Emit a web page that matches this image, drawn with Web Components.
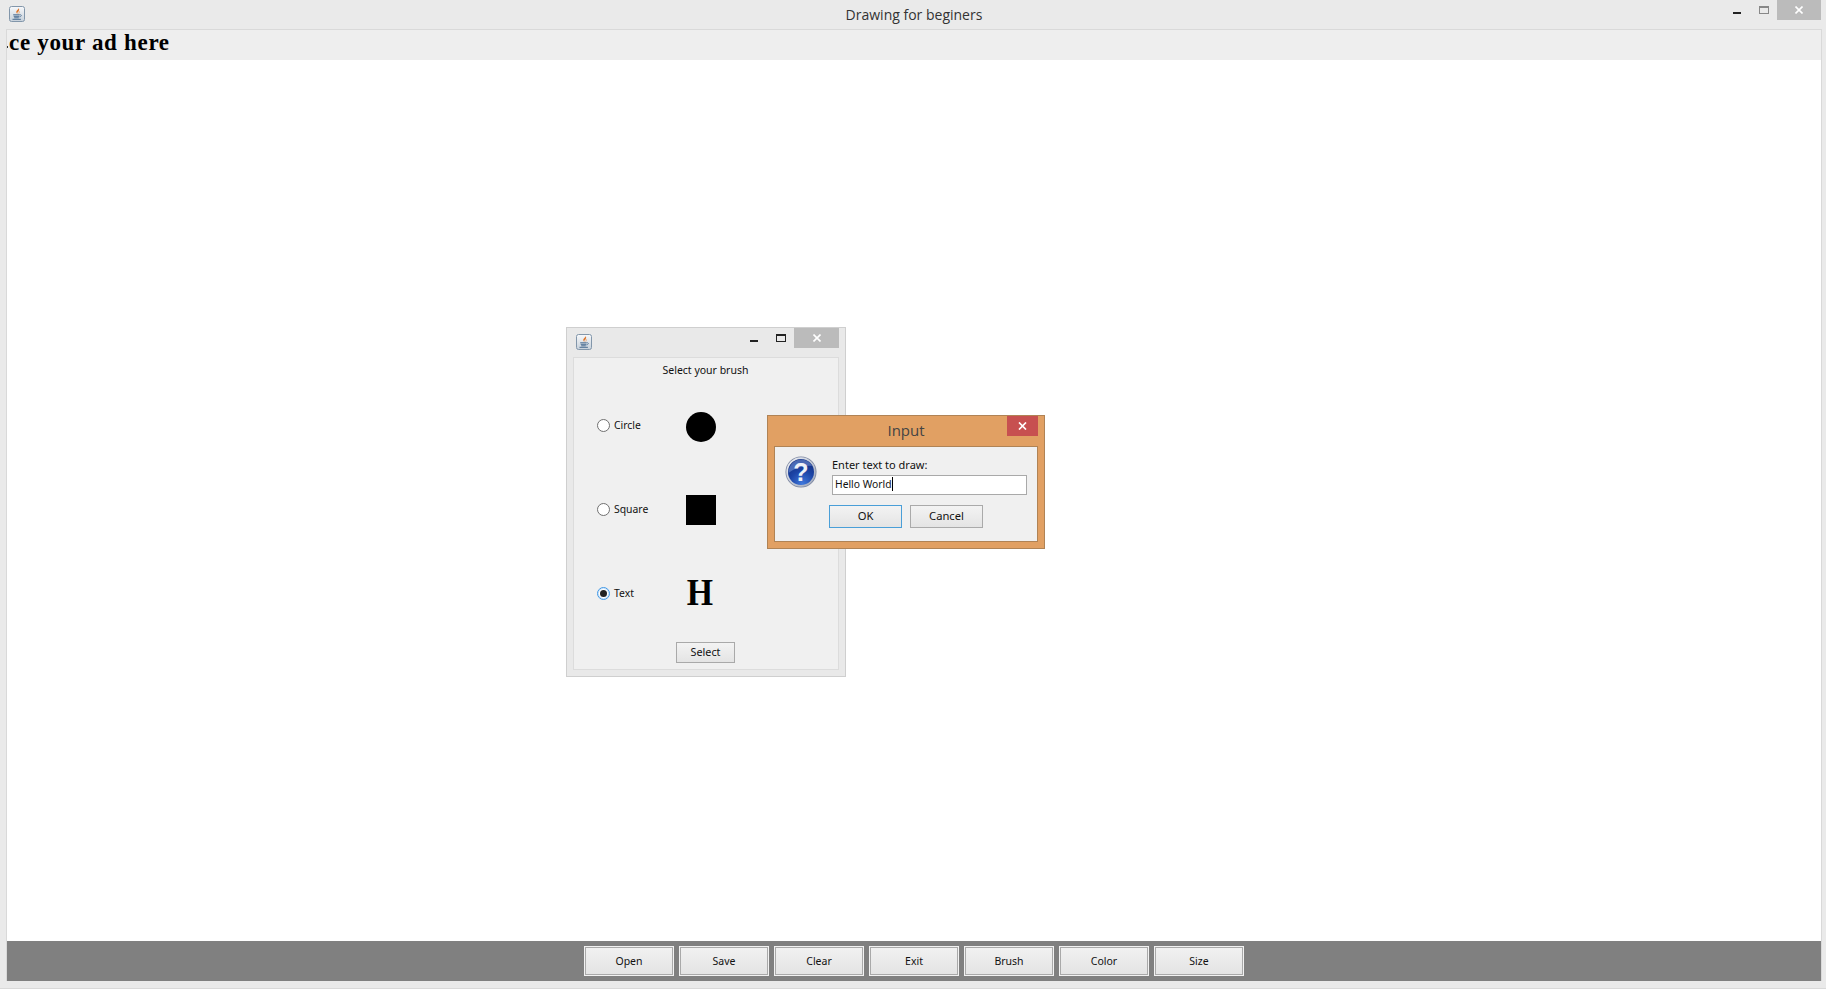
<!DOCTYPE html>
<html>
<head>
<meta charset="utf-8">
<title>Drawing for beginers</title>
<style>
html, body { margin: 0; height: 100%; overflow: hidden; background: #eaeaea; }
body { font-family: "Noto Sans", "Liberation Sans", sans-serif; font-size: 11px; color: #111; }
</style>
</head>
<body>
<main-window caption="Drawing for beginers">
    <ad-banner>ce your ad here</ad-banner>
    <tool-bar slot="bar">
        <tool-button>Open</tool-button>
        <tool-button>Save</tool-button>
        <tool-button>Clear</tool-button>
        <tool-button>Exit</tool-button>
        <tool-button>Brush</tool-button>
        <tool-button>Color</tool-button>
        <tool-button>Size</tool-button>
    </tool-bar>
</main-window>
<brush-window>
    <brush-option shape="circle">Circle</brush-option>
    <brush-option shape="square">Square</brush-option>
    <brush-option shape="text" checked>Text</brush-option>
</brush-window>
<input-dialog></input-dialog>

<script>
const JAVA_ICON = `
<svg width="16" height="16" viewBox="0 0 16 16" style="display:block">
  <defs><linearGradient id="jb" x1="0" y1="0" x2="0" y2="1">
    <stop offset="0" stop-color="#f8f9fb"/><stop offset="1" stop-color="#c6d0da"/>
  </linearGradient></defs>
  <rect x=".5" y=".5" width="15" height="15" rx="2" fill="url(#jb)" stroke="#8296aa"/>
  <path d="M9.500 1.800C10.400 3.400 7 4.300 7.300 6.300 7.450 7.200 8 7.600 8.400 8 8.200 7 8.300 6.500 9.100 5.700 10 4.800 10.800 3.400 9.500 1.800Z" fill="#e0762a"/>
  <path d="M9.700 5.500C11 5.200 10 6.800 9.800 7.600" stroke="#e79a5a" stroke-width=".8" fill="none"/>
  <path d="M4.200 8.800h6.600M4.700 10.300h5.600M5.200 11.800h4.600M3.500 13.300h8.400" stroke="#4a6d92" stroke-width="1" fill="none"/>
  <path d="M11 8.800c1.700-.4 2.100 1.600-.6 2.200" stroke="#4a6d92" stroke-width=".8" fill="none"/>
</svg>`;

class MainWindow extends HTMLElement {
    constructor() {
        super();
        this.attachShadow({ mode: "open" });
        this.shadowRoot.innerHTML = `
<style>
:host { display: flex; flex-direction: column; height: 989px; box-sizing: border-box; border-bottom: 1px solid #d9d9d9; }
.title { flex: 0 0 29px; display: flex; position: relative; align-items: flex-start; }
.icon { margin: 6px 0 0 9px; }
.caption { position: absolute; left: 0; right: 0; top: 5px; text-align: center; font: 14px/19px "Open Sans", sans-serif; color: #333; padding-left: 2px; }
.controls { margin-left: auto; margin-right: 5px; display: flex; position: relative; }
.frame { flex: 1; min-height: 0; display: flex; flex-direction: column; margin: 0 4px 7px 6px; border: 1px solid #d9d9d9; border-bottom: 0; }
.canvas { flex: 1; min-height: 0; background: #fff; display: flex; flex-direction: column; }
</style>
<div class="title">
    <div class="icon">${JAVA_ICON}</div>
    <div class="caption"></div>
    <div class="controls"><win-controls></win-controls></div>
</div>
<div class="frame">
    <div class="canvas"><slot></slot></div>
    <slot name="bar"></slot>
</div>`;
        this.shadowRoot.querySelector(".caption").textContent = this.getAttribute("caption");
    }
}

class WinControls extends HTMLElement {
    constructor() {
        super();
        this.attachShadow({ mode: "open" });
        this.shadowRoot.innerHTML = `
<style>
:host { display: flex; align-items: flex-start; }
.min { width: 8px; height: 2px; background: #222; margin: 12px 18px 0 0; }
.max { width: 10px; height: 8px; box-sizing: border-box; border: 1px solid var(--max-color, #888); border-top-width: 2px; margin: 6px 8px 0 0; }
.close { width: var(--close-width, 44px); height: 20px; background: #bbb; display: flex; align-items: center; justify-content: center; }
svg { display: block; }
</style>
<div class="min"></div>
<div class="max"></div>
<div class="close"><svg width="8" height="8" viewBox="0 0 8 8"><path d="M.5.5l7 7M7.500.5l-7 7" stroke="#fff" stroke-width="1.600"/></svg></div>`;
    }
}

class AdBanner extends HTMLElement {
    constructor() {
        super();
        this.attachShadow({ mode: "open" });
        this.shadowRoot.innerHTML = `
<style>
:host { display: block; flex: 0 0 30px; height: 30px; background: #eeeeee; overflow: hidden; box-sizing: border-box; padding-left: 2px;
    font: bold 23px/26px "Liberation Serif", serif; color: #000; letter-spacing: .68px; position: relative; }
:host::before { content: ""; position: absolute; left: 0; top: 16px; width: 1px; height: 2px; background: #333; }
</style>
<slot></slot>`;
    }
}

class ToolBar extends HTMLElement {
    constructor() {
        super();
        this.attachShadow({ mode: "open" });
        this.shadowRoot.innerHTML = `
<style>
:host { display: flex; justify-content: center; gap: 5px; height: 40px; padding: 5px 0; box-sizing: border-box; background: #808080; }
</style>
<slot></slot>`;
    }
}

class ToolButton extends HTMLElement {
    constructor() {
        super();
        this.attachShadow({ mode: "open" });
        this.shadowRoot.innerHTML = `
<style>
:host { display: flex; align-items: center; justify-content: center; width: 90px; height: 30px; box-sizing: border-box;
    border: 1px solid #f2f2f2; box-shadow: inset 0 0 0 1px #a9a9a9; background: linear-gradient(#f1f1f1, #e3e3e3);
    font: 10.500px/13px "Noto Sans", sans-serif; color: #111; }
</style>
<slot></slot>`;
    }
}

class BrushOption extends HTMLElement {
    constructor() {
        super();
        this.attachShadow({ mode: "open" });
        const shape = this.getAttribute("shape");
        this.shadowRoot.innerHTML = `
<style>
:host { display: flex; align-items: center; height: 84px; padding-left: 23px; }
.radio { width: 13px; height: 13px; box-sizing: border-box; border-radius: 50%; border: 1px solid #707070; background: #fff; display: flex; align-items: center; justify-content: center; }
:host([checked]) .radio { border-color: #3f97e6; box-shadow: inset 0 0 0 1px #cfe4f7; }
.dot { width: 7px; height: 7px; border-radius: 50%; background: #222; display: none; }
:host([checked]) .dot { display: block; }
label { margin-left: 4px; width: 72px; font: 10.400px/13px "Noto Sans", sans-serif; color: #111; }
.shape { width: 30px; height: 30px; background: #000; margin-top: 2px; }
.circle { border-radius: 50%; margin-top: 4px; }
.text { background: none; display: flex; align-items: center; justify-content: center; font: bold 38px/30px "Liberation Serif", serif; color: #000; margin: -2px 0 0 -1px; }
.text span { display: inline-block; transform: scaleX(.89); }
</style>
<div class="radio"><div class="dot"></div></div>
<label><slot></slot></label>
<div class="shape ${shape}">${shape == "text" ? "<span>H</span>" : ""}</div>`;
    }
}

class BrushWindow extends HTMLElement {
    constructor() {
        super();
        this.attachShadow({ mode: "open" });
        this.shadowRoot.innerHTML = `
<style>
:host { position: absolute; left: 566px; top: 327px; width: 280px; height: 350px; box-sizing: border-box; background: #e9e9e9; border: 1px solid #cfcfcf; display: flex; flex-direction: column; }
.title { flex: 0 0 29px; display: flex; align-items: flex-start; --max-color: #222; --close-width: 45px; }
.icon { margin: 6px 0 0 9px; }
.controls { margin-left: auto; margin-right: 6px; }
.panel { flex: 1; margin: 0 6px 6px 6px; border: 1px solid #dcdcdc; background: #f0f0f0; display: flex; flex-direction: column; }
h2 { margin: 0; height: 25px; padding-right: 1px; text-align: center; font: 10.500px/24px "Noto Sans", sans-serif; color: #111; }
.foot { display: flex; justify-content: center; margin-top: 7px; padding-right: 1px; }
.btn { width: 59px; height: 21px; box-sizing: border-box; border: 1px solid #a9a9a9; background: linear-gradient(#f3f3f3, #e4e4e4); font: 10.800px/18px "Noto Sans", sans-serif; text-align: center; color: #111; }
</style>
<div class="title">
    <div class="icon">${JAVA_ICON}</div>
    <div class="controls"><win-controls></win-controls></div>
</div>
<div class="panel">
    <h2>Select your brush</h2>
    <slot></slot>
    <div class="foot"><div class="btn">Select</div></div>
</div>`;
    }
}

class InputDialog extends HTMLElement {
    constructor() {
        super();
        this.attachShadow({ mode: "open" });
        this.shadowRoot.innerHTML = `
<style>
:host { position: absolute; left: 767px; top: 415px; width: 278px; height: 134px; box-sizing: border-box; background: #e1a063; border: 1px solid #b08355; display: flex; flex-direction: column; }
.title { flex: 0 0 30px; display: flex; position: relative; }
.title span { flex: 1; text-align: center; font: 15px/29px "Open Sans", sans-serif; color: #444; }
.close { position: absolute; right: 6px; top: 0; width: 31px; height: 20px; background: #c75050; display: flex; align-items: center; justify-content: center; }
.panel { flex: 1; margin: 0 6px 6px 6px; border: 1px solid #b08355; background: #f0f0f0; display: flex; }
.icon { margin: 9px 0 0 10px; width: 32px; height: 32px; flex: none; }
.body { margin: 9px 0 0 15px; width: 195px; }
.prompt { font: 11px/17px "Noto Sans", sans-serif; color: #111; height: 19px; }
.field { height: 20px; box-sizing: border-box; border: 1px solid #a9a9a9; background: #fff; font: 10.300px/17px "Noto Sans", sans-serif; padding-left: 2px; color: #111; }
.caret { display: inline-block; width: 1px; height: 14px; background: #000; vertical-align: -3px; }
.buttons { display: flex; gap: 8px; margin: 10px 0 0 -3px; }
.btn { width: 73px; height: 23px; box-sizing: border-box; border: 1px solid #aaa; background: linear-gradient(#f3f3f3, #e4e4e4); font: 11.200px/20px "Noto Sans", sans-serif; text-align: center; color: #111; }
.btn.default { border-color: #4a9fd8; }
</style>
<div class="title">
    <span>Input</span>
    <div class="close"><svg width="9" height="8" viewBox="0 0 9 8" style="display:block"><path d="M1 .5l7 7M8 .5l-7 7" stroke="#fff" stroke-width="1.700"/></svg></div>
</div>
<div class="panel">
    <div class="icon">
        <svg width="32" height="32" viewBox="0 0 32 32" style="display:block">
            <defs>
                <radialGradient id="qb" cx=".55" cy=".95" r=".9"><stop offset="0" stop-color="#3f78dc"/><stop offset=".55" stop-color="#1c44a6"/><stop offset="1" stop-color="#132f80"/></radialGradient>
                <linearGradient id="qr" x1="0" y1="0" x2="1" y2="1"><stop offset="0" stop-color="#f2f4f8"/><stop offset="1" stop-color="#9aa4b8"/></linearGradient>
            </defs>
            <circle cx="16" cy="16" r="15.500" fill="#7c86a0"/>
            <circle cx="16" cy="16" r="14.700" fill="url(#qr)"/>
            <circle cx="16" cy="16" r="13" fill="url(#qb)"/>
            <path d="M3.500 17C3.500 9 9 3.500 16 3.500 21 3.500 25 6 27 10 19 9 10 12 3.500 17Z" fill="#7fa0e2" opacity=".5"/>
            <text x="16" y="25" text-anchor="middle" font-family="Liberation Sans, sans-serif" font-weight="bold" font-size="25" fill="#eef1f7">?</text>
        </svg>
    </div>
    <div class="body">
        <div class="prompt">Enter text to draw:</div>
        <div class="field">Hello World<span class="caret"></span></div>
        <div class="buttons"><div class="btn default">OK</div><div class="btn">Cancel</div></div>
    </div>
</div>`;
    }
}

window.customElements.define("win-controls", WinControls);
window.customElements.define("main-window", MainWindow);
window.customElements.define("ad-banner", AdBanner);
window.customElements.define("tool-bar", ToolBar);
window.customElements.define("tool-button", ToolButton);
window.customElements.define("brush-option", BrushOption);
window.customElements.define("brush-window", BrushWindow);
window.customElements.define("input-dialog", InputDialog);
</script>
</body>
</html>
